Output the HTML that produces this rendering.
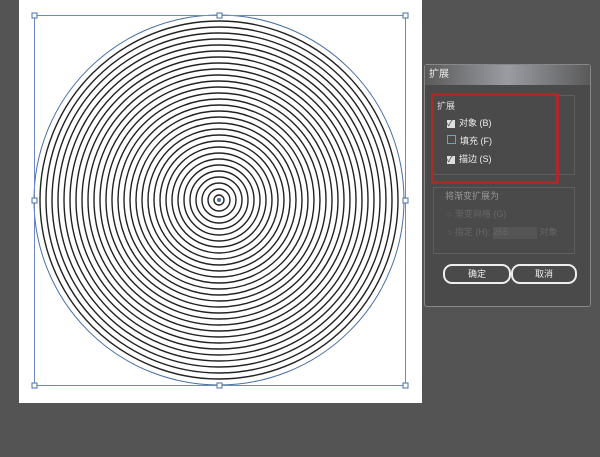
<html><body style="margin:0;width:600px;height:457px;background:#545454;overflow:hidden;position:relative;font-family:'Liberation Sans','Noto Sans CJK SC',sans-serif">
<div style="position:absolute;left:19px;top:0;width:403px;height:403px;background:#fff"></div>
<svg style="position:absolute;left:0;top:0" width="600" height="457">
<g fill="none" stroke="#222" stroke-width="1.4" id="rings"></g>
<circle cx="219" cy="200" r="185" fill="none" stroke="#4a6fa5" stroke-width="1"/>
<circle cx="219" cy="200" r="2" fill="#4a6fa5"/>
<rect x="34.5" y="15.5" width="371" height="370" fill="none" stroke="#6a8cc0" stroke-width="1"/>
<g fill="#fff" stroke="#4a6fa5"><rect x="32" y="13" width="5" height="5"/><rect x="217" y="13" width="5" height="5"/><rect x="403" y="13" width="5" height="5"/><rect x="32" y="198" width="5" height="5"/><rect x="403" y="198" width="5" height="5"/><rect x="32" y="383" width="5" height="5"/><rect x="217" y="383" width="5" height="5"/><rect x="403" y="383" width="5" height="5"/></g>
</svg>
<script>
var g=document.getElementById('rings'),s='';
for(var k=0;k<30;k++){s+='<circle cx="219" cy="200" r="'+(5+6*k)+'"/>';}
g.innerHTML=s;
</script>
<div style="position:absolute;left:424px;top:64px;width:167px;height:243px;background:#4a4a4a;border:1px solid #888;border-radius:3px;box-sizing:border-box">
<div style="height:20px;background:linear-gradient(90deg,#5a5a5a,#9a9ca2 50%,#5a5a5a);color:#eee;font-size:10px;line-height:20px;padding-left:4px">扩展</div>
<div style="position:absolute;left:8px;top:30px;width:140px;height:78px;border:1px solid #5e5e5e"></div>
<div style="position:absolute;left:8px;top:122px;width:140px;height:65px;border:1px solid #5e5e5e"></div>
<div style="position:absolute;left:12px;top:34px;color:#ddd;font-size:9px">扩展</div>
<div style="position:absolute;left:22px;top:52px;color:#eee;font-size:9px;line-height:12px"><span style="display:inline-block;width:8px;height:8px;background:#ddd;margin-right:4px;color:#333;font-size:8px;line-height:8px">✓</span>对象 (B)</div>
<div style="position:absolute;left:22px;top:70px;color:#eee;font-size:9px;line-height:12px"><span style="display:inline-block;width:7px;height:7px;border:1px solid #6aa;margin-right:4px"></span>填充 (F)</div>
<div style="position:absolute;left:22px;top:88px;color:#eee;font-size:9px;line-height:12px"><span style="display:inline-block;width:8px;height:8px;background:#ddd;margin-right:4px;color:#333;font-size:8px;line-height:8px">✓</span>描边 (S)</div>
<div style="position:absolute;left:6px;top:28px;width:122px;height:85px;border:3px solid #b0262a"></div>
<div style="position:absolute;left:20px;top:124px;color:#999;font-size:9px">将渐变扩展为</div>
<div style="position:absolute;left:22px;top:142px;color:#666;font-size:9px">○ 渐变网格 (G)</div>
<div style="position:absolute;left:22px;top:160px;color:#666;font-size:9px">○ 指定 (H): <span style="display:inline-block;width:44px;height:12px;background:#555;vertical-align:middle">255</span> 对象</div>
<div style="position:absolute;left:18px;top:199px;width:64px;height:16px;border:2px solid #eee;border-radius:9px;color:#eee;font-size:9px;text-align:center;line-height:16px">确定</div>
<div style="position:absolute;left:86px;top:199px;width:62px;height:16px;border:2px solid #eee;border-radius:9px;color:#eee;font-size:9px;text-align:center;line-height:16px">取消</div>
</div>
</body></html>
